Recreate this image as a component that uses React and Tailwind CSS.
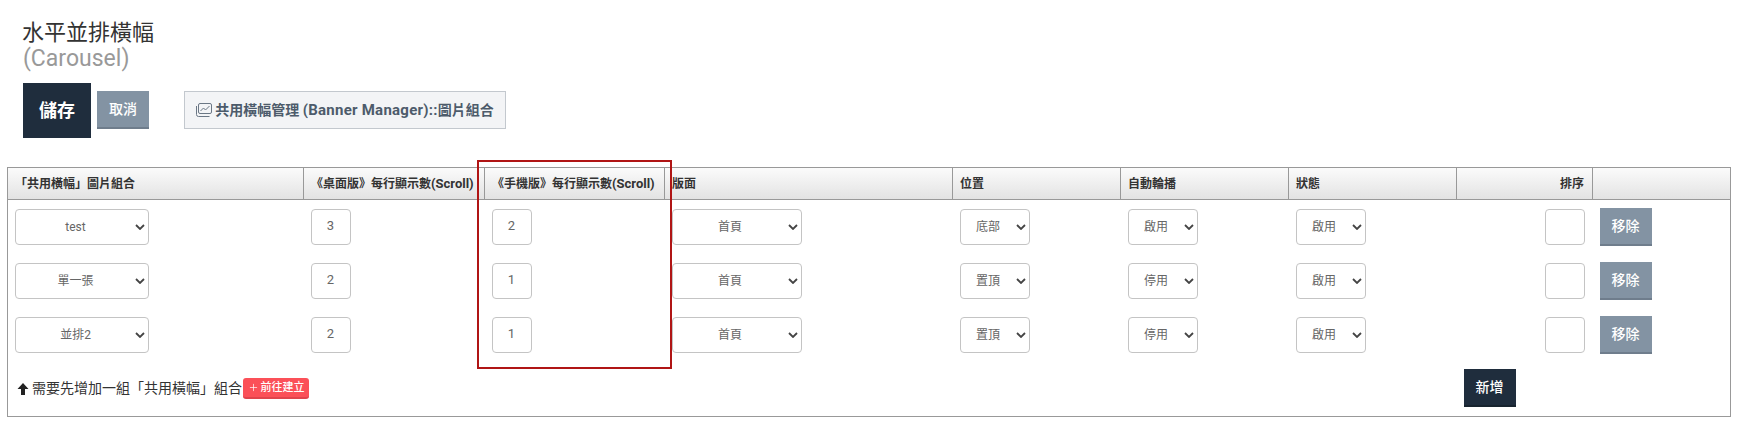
import { Plus } from "lucide-react";

const font = "font-['Roboto','Noto_Sans_CJK_TC',sans-serif]";

const rows = [
  { group: "test", desktop: "3", mobile: "2", place: "底部", auto: "啟用" },
  { group: "單一張", desktop: "2", mobile: "1", place: "置頂", auto: "停用" },
  { group: "並排2", desktop: "2", mobile: "1", place: "置頂", auto: "停用" },
];

function Select({ value, width }) {
  return (
    <div className={`relative ${width}`}>
      <select
        defaultValue={value}
        className="block h-[36px] w-full appearance-none rounded-[4px] border border-[#c4c4c4] bg-white pl-[4px] pr-[17px] pt-[1px] text-center text-[12px] text-[#666] outline-none"
      >
        <option>{value}</option>
      </select>
      <svg
        viewBox="0 0 10 6"
        className="pointer-events-none absolute right-[4px] top-[15px] h-[6px] w-[10px] fill-none stroke-[#444] stroke-[1.8]"
      >
        <path d="M1 1l4 4 4-4" />
      </svg>
    </div>
  );
}

function NumberBox({ value, width = "w-[40px]" }) {
  return (
    <input
      defaultValue={value}
      className={`block h-[36px] ${width} rounded-[4px] border border-[#c4c4c4] bg-white pb-[2px] text-center text-[13px] text-[#666] outline-none`}
    />
  );
}

function Th({ children, className = "" }) {
  return (
    <th className={`h-[32px] border-r border-[#999] px-[7px] text-left text-[12px] font-bold whitespace-nowrap text-[#333] last:border-r-0 ${className}`}>
      {children}
    </th>
  );
}

export default function App() {
  return (
    <div className={`relative h-[436px] w-[1740px] overflow-hidden bg-white ${font}`}>
      <div className="px-[23px] pt-[19px]">
        <h1 className="-ml-px text-[22px] leading-[28px] font-normal text-[#333]">水平並排橫幅</h1>
        <p className="-mt-px text-[23px] leading-[25px] text-[#999]">(Carousel)</p>
        <div className="mt-[12px] flex items-center">
          <button className="h-[55px] w-[68px] bg-[#1f2d3d] text-[18px] font-bold text-white">儲存</button>
          <button className="mb-[1px] ml-[6px] h-[38px] w-[52px] border-b-2 border-[#6f7d8c] bg-[#8393a3] text-[14px] font-medium text-white">取消</button>
          <button className="mb-[1px] ml-[35px] flex h-[38px] w-[322px] items-center justify-center gap-[3px] border border-[#c3c8ce] bg-[#f3f4f6] text-[14px] font-bold text-[#4d5b6b]">
            <svg viewBox="0 0 16 14" className="h-[14px] w-[16px] fill-none stroke-[#6b7785] stroke-[1]">
              <rect x="2.5" y="0.5" width="13" height="10" rx="1.5" />
              <path d="M0.5 3v8.5a2 2 0 0 0 2 2h11" />
              <path d="M4.5 8l3-3 2 2 4-4" />
            </svg>
            <span>
              共用橫幅管理 <span className="text-[15px] tracking-[0.25px]">(Banner Manager)::</span>圖片組合
            </span>
          </button>
        </div>
      </div>

      <div className="mt-[29px] px-[7px]">
        <table className="w-[1724px] table-fixed border-collapse border border-[#999]">
          <colgroup>
            <col className="w-[296px]" />
            <col className="w-[181px]" />
            <col className="w-[180px]" />
            <col className="w-[288px]" />
            <col className="w-[168px]" />
            <col className="w-[168px]" />
            <col className="w-[168px]" />
            <col className="w-[136px]" />
            <col />
          </colgroup>
          <thead>
            <tr className="border-b border-[#999] bg-gradient-to-b from-[#fbfbfb] to-[#e3e3e3]">
              <Th>「共用橫幅」圖片組合</Th>
              <Th>《桌面版》每行顯示數<span className="text-[13px]">(Scroll)</span></Th>
              <Th>《手機版》每行顯示數<span className="text-[13px]">(Scroll)</span></Th>
              <Th>版面</Th>
              <Th>位置</Th>
              <Th>自動輪播</Th>
              <Th>狀態</Th>
              <Th className="!pr-[8px] !text-right">排序</Th>
              <Th />
            </tr>
          </thead>
          <tbody>
            {rows.map((row) => (
              <tr key={row.group} className="h-[54px]">
                <td className="px-[7px]"><Select value={row.group} width="w-[134px]" /></td>
                <td className="px-[7px]"><NumberBox value={row.desktop} /></td>
                <td className="px-[7px]"><NumberBox value={row.mobile} /></td>
                <td className="px-[7px]"><Select value="首頁" width="w-[130px]" /></td>
                <td className="px-[7px]"><Select value={row.place} width="w-[70px]" /></td>
                <td className="px-[7px]"><Select value={row.auto} width="w-[70px]" /></td>
                <td className="px-[7px]"><Select value="啟用" width="w-[70px]" /></td>
                <td className="pl-[7px] pr-[8px]"><div className="flex justify-end"><NumberBox value="" /></div></td>
                <td className="px-[7px]">
                  <button className="h-[38px] w-[52px] border-b-2 border-[#6f7d8c] bg-[#8393a3] pt-[1px] text-[14px] font-medium text-white">移除</button>
                </td>
              </tr>
            ))}
            <tr className="h-[55px]">
              <td colSpan={7} className="px-[9px]">
                <div className="flex items-center text-[14px] text-[#333]">
                  <svg viewBox="0 0 12 12" className="mr-[3px] h-[12px] w-[12px] fill-[#222]">
                    <path d="M6 0l5.5 6H8v6H4V6H.5z" />
                  </svg>
                  需要先增加一組「共用橫幅」組合
                  <span className="ml-[1px] flex h-[21px] w-[66px] items-center justify-center gap-[2px] rounded-[3px] border-b-2 border-[#e0444c] bg-[#fb5058] text-[11px] font-medium text-white">
                    <Plus size={11} strokeWidth={1.5} />
                    前往建立
                  </span>
                </div>
              </td>
              <td colSpan={2} className="px-[7px]">
                <button className="mb-[1px] h-[38px] w-[52px] border-b-2 border-[#18242f] bg-[#1f2d3d] text-[14px] font-medium text-white">新增</button>
              </td>
            </tr>
          </tbody>
        </table>
      </div>

      <div className="pointer-events-none absolute left-[477px] top-[160px] h-[209px] w-[195px] border-2 border-[#b01515]" />
    </div>
  );
}
